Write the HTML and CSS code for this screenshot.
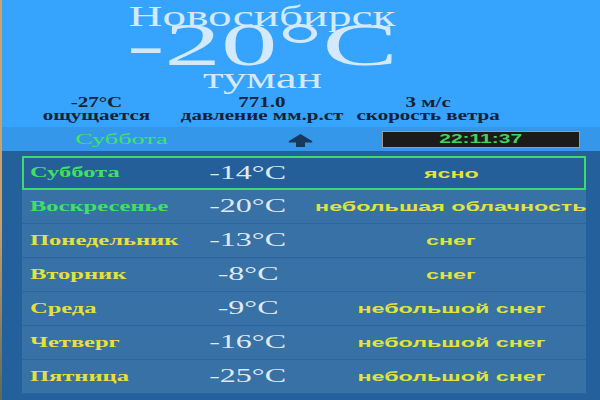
FILE: index.html
```html
<!DOCTYPE html>
<html lang="ru">
<head>
<meta charset="utf-8">
<title>Погода</title>
<link rel="stylesheet" href="styles.css">
</head>
<body>
<div class="page">
  <header class="hero">
    <div class="hero-inner">
      <div class="city"><span class="sx s-city">Новосибирск</span></div>
      <div class="temp"><span class="sx s-temp">-20°C</span></div>
      <div class="cond"><span class="sx s-cond">туман</span></div>
      <div class="stats">
        <div class="stat"><span class="sx s-stat">-27°C</span><span class="sx s-stat">ощущается</span></div>
        <div class="stat"><span class="sx s-stat">771.0</span><span class="sx s-stat">давление мм.р.ст</span></div>
        <div class="stat"><span class="sx s-stat">3 м/с</span><span class="sx s-stat">скорость ветра</span></div>
      </div>
    </div>
  </header>
  <div class="bar">
    <div class="bar-day"><span class="sx s-bar">Суббота</span></div>
    <div class="bar-arrow">
      <svg class="arrow" width="25" height="13" viewBox="0 0 25 13"><path d="M12.5 0 L24 7 Q25 8.5 23 8.5 L17 8.5 L17 13 L8 13 L8 8.5 L2 8.5 Q0 8.5 1 7 Z" fill="#17395b"/></svg>
    </div>
    <div class="bar-clock"><div class="clock"><span class="sx s-clock">22:11:37</span></div></div>
  </div>
  <main class="list">
    <div class="row sel">
      <div class="day green"><span class="sx s-day">Суббота</span></div>
      <div class="t"><span class="sx s-t">-14°C</span></div>
      <div class="d"><span class="sx s-d">ясно</span></div>
    </div>
    <div class="row">
      <div class="day green"><span class="sx s-day">Воскресенье</span></div>
      <div class="t"><span class="sx s-t">-20°C</span></div>
      <div class="d"><span class="sx s-d">небольшая облачность</span></div>
    </div>
    <div class="row">
      <div class="day"><span class="sx s-day">Понедельник</span></div>
      <div class="t"><span class="sx s-t">-13°C</span></div>
      <div class="d"><span class="sx s-d">снег</span></div>
    </div>
    <div class="row">
      <div class="day"><span class="sx s-day">Вторник</span></div>
      <div class="t"><span class="sx s-t">-8°C</span></div>
      <div class="d"><span class="sx s-d">снег</span></div>
    </div>
    <div class="row">
      <div class="day"><span class="sx s-day">Среда</span></div>
      <div class="t"><span class="sx s-t">-9°C</span></div>
      <div class="d"><span class="sx s-d">небольшой снег</span></div>
    </div>
    <div class="row">
      <div class="day"><span class="sx s-day">Четверг</span></div>
      <div class="t"><span class="sx s-t">-16°C</span></div>
      <div class="d"><span class="sx s-d">небольшой снег</span></div>
    </div>
    <div class="row">
      <div class="day"><span class="sx s-day">Пятница</span></div>
      <div class="t"><span class="sx s-t">-25°C</span></div>
      <div class="d"><span class="sx s-d">небольшой снег</span></div>
    </div>
  </main>
</div>
</body>
</html>
```

FILE: styles.css
```css
html, body {
  margin: 0;
  padding: 0;
}
body {
  width: 600px;
  height: 400px;
  overflow: hidden;
  background: #23609c;
  font-family: "Liberation Serif", "Times New Roman", serif;
}
.page {
  height: 400px;
  box-sizing: border-box;
  border-left: 2px solid #c9a36e;
  border-image: linear-gradient(#c9a36e 55%, #5a6a5c) 1;
}
.sx {
  display: inline-block;
  white-space: nowrap;
  transform-origin: center center;
}
.hero {
  background: #36a3fc;
  height: 127px;
  box-sizing: border-box;
  padding-top: 1px;
}
.hero-inner {
  width: 498px;
  margin-left: 11px;
  text-align: center;
  color: #d3e9ff;
}
.city {
  font-size: 30px;
  line-height: 29px;
}
.s-city { transform: scaleX(1.57); }
.temp {
  font-size: 62px;
  line-height: 28px;
}
.s-temp { transform: scaleX(1.82); }
.cond {
  font-size: 29px;
  line-height: 34px;
  padding-top: 3px;
}
.s-cond { transform: scaleX(1.63); }
.stats {
  display: grid;
  grid-template-columns: repeat(3, 1fr);
  font-size: 15px;
  line-height: 13px;
  font-weight: bold;
  color: #142233;
  margin-top: 1px;
}
.stat {
  display: flex;
  flex-direction: column;
  align-items: center;
}
.s-stat { transform: scaleX(1.4); }

.bar {
  display: grid;
  grid-template-columns: 238px 120px 1fr;
  align-items: center;
  height: 24px;
  background: #3497ea;
}
.bar-day {
  text-align: center;
  font-size: 15px;
  color: #3ee860;
  line-height: 24px;
}
.s-bar { transform: scaleX(1.75); }
.bar-arrow {
  display: flex;
  justify-content: center;
  align-items: center;
  height: 24px;
}
.arrow {
  display: block;
  margin-top: 3px;
}
.bar-clock {
  display: flex;
  align-items: center;
}
.clock {
  margin-left: 22px;
  width: 198px;
  height: 17px;
  box-sizing: border-box;
  background: #1b1b1b;
  border: 1px solid #a89a86;
  text-align: center;
  font-family: "Liberation Sans", Arial, sans-serif;
  font-weight: bold;
  font-size: 12px;
  line-height: 15px;
  color: #3fd45a;
}
.s-clock { transform: scaleX(1.75); }

.list {
  padding: 5px 0 0 20px;
}
.row {
  width: 564px;
  height: 34px;
  box-sizing: border-box;
  display: grid;
  grid-template-columns: 150px 136px 1fr;
  align-items: center;
  background: #3771a5;
  border-bottom: 1px solid #2a66a0;
  padding-left: 8px;
}
.row.sel {
  background: #245f99;
  border-bottom: none;
  box-shadow: inset 0 0 0 2px #3ddc68;
}
.day {
  font-weight: bold;
  font-size: 14px;
  color: #e6e03e;
  text-align: left;
}
.day.green { color: #3fe064; }
.s-day {
  transform-origin: left center;
  transform: scaleX(1.75);
}
.t {
  text-align: center;
  font-size: 18px;
  color: #dfe9f5;
}
.s-t { transform: scaleX(1.78); }
.d {
  text-align: center;
  font-family: "Liberation Sans", Arial, sans-serif;
  font-weight: bold;
  font-size: 13px;
  color: #e3e33c;
}
.s-d { transform: scaleX(1.79); }
```
